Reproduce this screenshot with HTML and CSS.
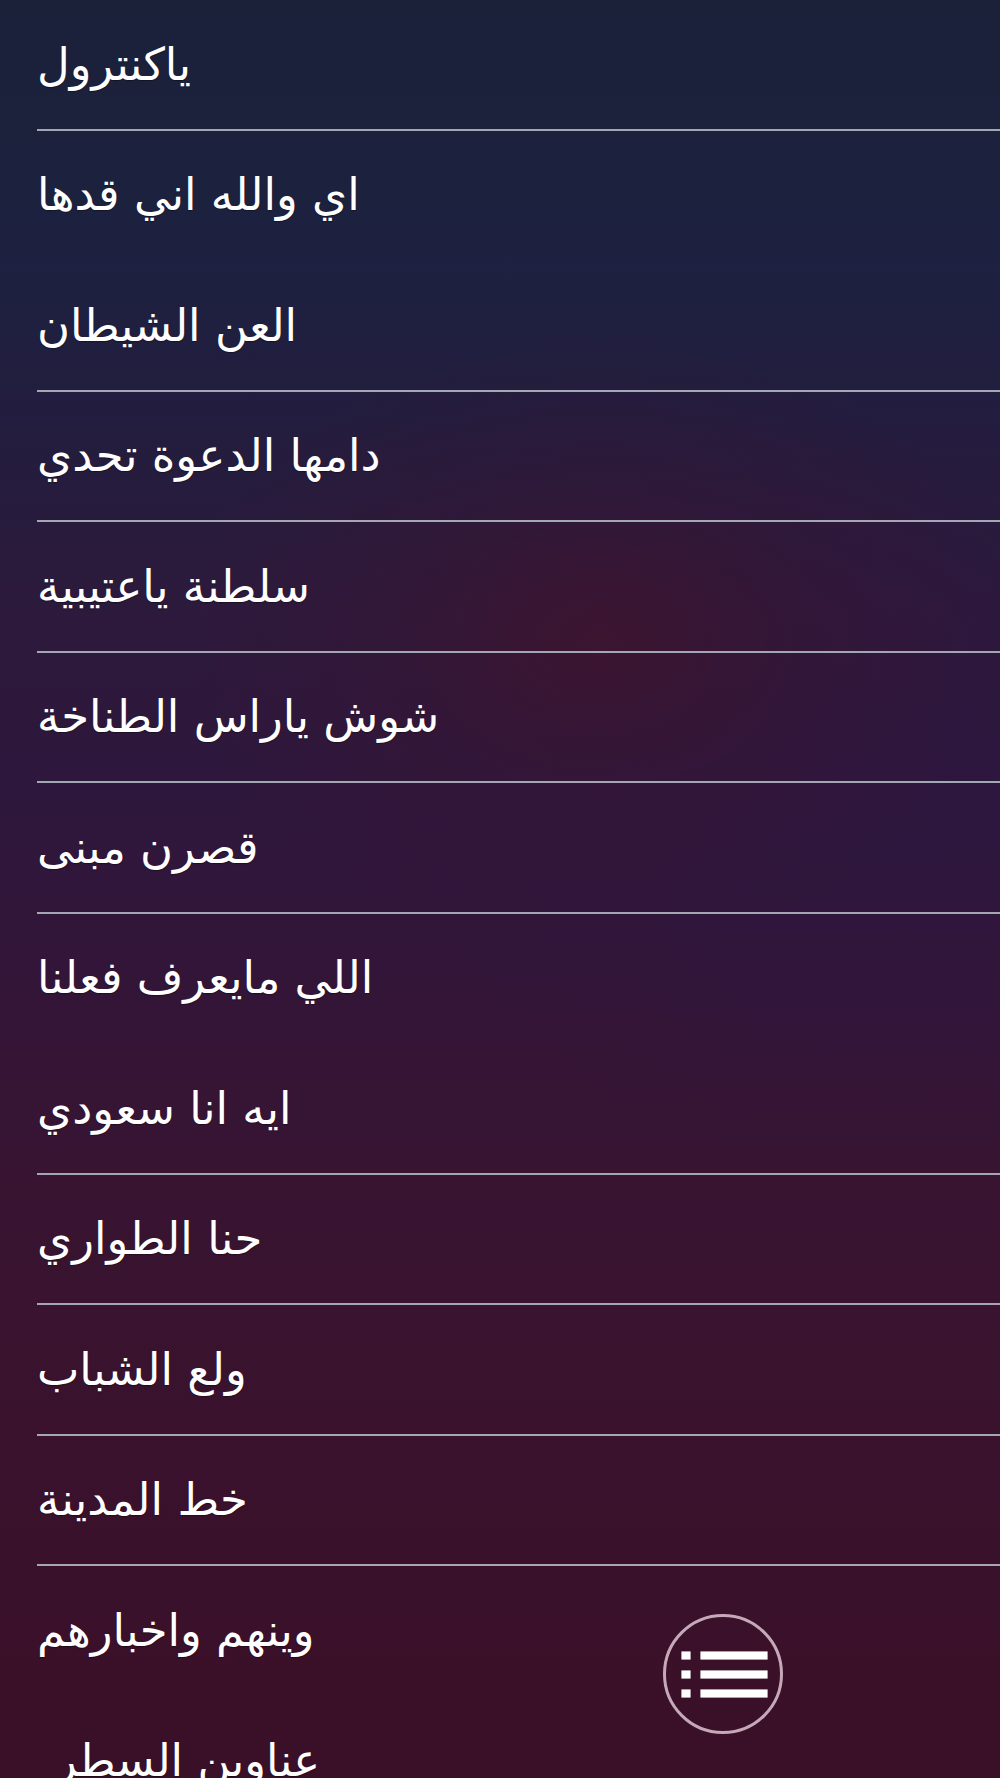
FILE: index.html
```html
<!DOCTYPE html>
<html lang="ar">
<head>
<meta charset="utf-8">
<title>قائمة</title>
<link rel="stylesheet" href="styles.css">
</head>
<body>
<div class="screen">
  <ul class="list">
    <li class="item sep"><span class="title">ياكنترول</span></li>
    <li class="item"><span class="title">اي والله اني قدها</span></li>
    <li class="item sep"><span class="title">العن الشيطان</span></li>
    <li class="item sep"><span class="title">دامها الدعوة تحدي</span></li>
    <li class="item sep"><span class="title">سلطنة ياعتيبية</span></li>
    <li class="item sep"><span class="title">شوش ياراس الطناخة</span></li>
    <li class="item sep"><span class="title">قصرن مبنى</span></li>
    <li class="item"><span class="title">اللي مايعرف فعلنا</span></li>
    <li class="item sep"><span class="title">ايه انا سعودي</span></li>
    <li class="item sep"><span class="title">حنا الطواري</span></li>
    <li class="item sep"><span class="title">ولع الشباب</span></li>
    <li class="item sep"><span class="title">خط المدينة</span></li>
    <li class="item"><span class="title">وينهم واخبارهم</span></li>
    <li class="item indent"><span class="title">عناوين السطر</span></li>
  </ul>
  <button class="fab" aria-label="menu">
    <svg width="120" height="120" viewBox="0 0 120 120">
      <g fill="#ffffff" stroke="#3a1028" stroke-width="0.8">
        <rect x="18" y="37" width="10" height="9"/>
        <rect x="37" y="37" width="68" height="9"/>
        <rect x="18" y="56" width="10" height="9"/>
        <rect x="37" y="56" width="68" height="9"/>
        <rect x="18" y="75" width="10" height="9"/>
        <rect x="37" y="75" width="68" height="9"/>
      </g>
    </svg>
  </button>
</div>
</body>
</html>
```
FILE: styles.css
```css
html, body {
  margin: 0;
  padding: 0;
}
body {
  width: 1000px;
  height: 1778px;
  overflow: hidden;
  font-family: "DejaVu Sans", "Noto Sans", sans-serif;
}
.screen {
  position: relative;
  width: 1000px;
  height: 1778px;
  overflow: hidden;
  background:
    radial-gradient(ellipse 420px 300px at 600px 640px, rgba(62, 20, 46, 0.85) 0%, rgba(58, 20, 50, 0.4) 50%, rgba(50, 22, 56, 0) 100%),
    radial-gradient(ellipse 500px 400px at 900px 780px, rgba(44, 22, 64, 0.6) 0%, rgba(44, 22, 64, 0) 100%),
    linear-gradient(to bottom, #1b2139 0%, #1d2140 14%, #231d3e 24%, #2c1a3c 34%, #2e173c 45%, #331538 55%, #381432 66%, #3a122d 80%, #3a1028 100%);
}
.list {
  list-style: none;
  margin: 0;
  padding: 0 0 0 37px;
}
.item {
  box-sizing: border-box;
  height: 130.5px;
  display: flex;
  align-items: center;
  border-bottom: 2px solid transparent;
}
.item.sep {
  border-bottom-color: #a3a7b4;
}
.item.indent {
  padding-left: 18px;
}
.title {
  color: #ffffff;
  font-size: 45px;
  line-height: 1;
  white-space: nowrap;
  text-shadow: 0 1px 1px rgba(0, 0, 0, 0.35);
}
.fab {
  position: absolute;
  left: 663px;
  top: 1614px;
  width: 120px;
  height: 120px;
  box-sizing: border-box;
  padding: 0;
  margin: 0;
  border: 3px solid #c6a9b8;
  border-radius: 50%;
  background: transparent;
  display: flex;
  align-items: center;
  justify-content: center;
}
.fab svg {
  display: block;
  width: 120px;
  height: 120px;
  flex: none;
}
```
